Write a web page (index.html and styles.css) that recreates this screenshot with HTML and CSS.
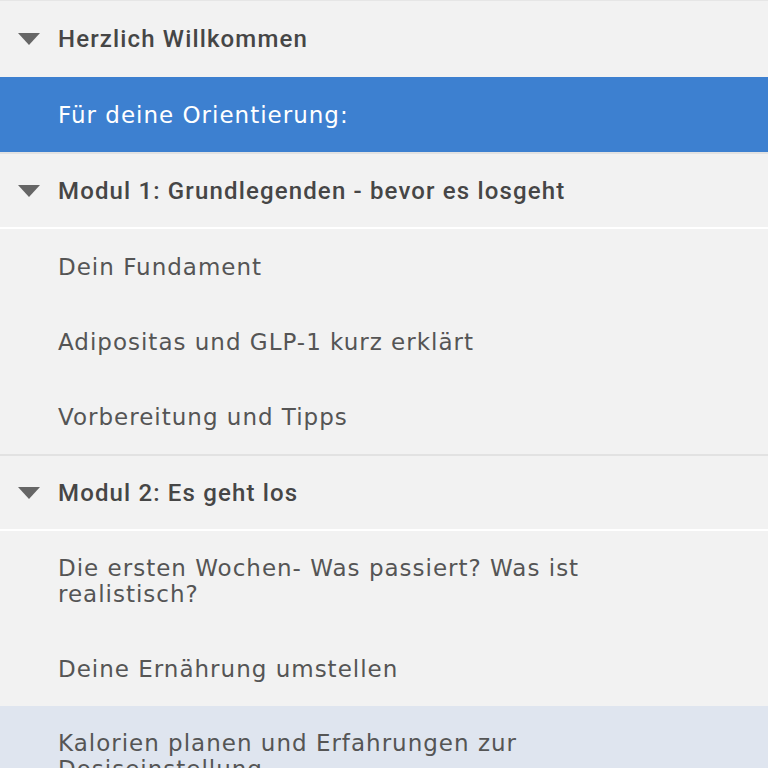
FILE: index.html
```html
<!DOCTYPE html>
<html lang="de">
<head>
<meta charset="utf-8">
<link rel="stylesheet" href="styles.css">
</head>
<body>
<nav class="toc">
  <div class="section">
    <div class="head"><span class="caret"></span><span class="head-text">Herzlich Willkommen</span></div>
    <div class="item active">Für deine Orientierung:</div>
  </div>
  <div class="section">
    <div class="head"><span class="caret"></span><span class="head-text">Modul 1: Grundlegenden - bevor es losgeht</span></div>
    <div class="item">Dein Fundament</div>
    <div class="item">Adipositas und GLP-1 kurz erklärt</div>
    <div class="item">Vorbereitung und Tipps</div>
  </div>
  <div class="section">
    <div class="head"><span class="caret"></span><span class="head-text">Modul 2: Es geht los</span></div>
    <div class="item tall">Die ersten Wochen- Was passiert? Was ist realistisch?</div>
    <div class="item">Deine Ernährung umstellen</div>
    <div class="item tall hover">Kalorien planen und Erfahrungen zur Dosiseinstellung</div>
  </div>
</nav>
</body>
</html>
```

FILE: styles.css
```css
html, body {
  margin: 0;
  padding: 0;
  background: #f2f2f2;
}
.toc {
  display: flex;
  flex-direction: column;
  border-top: 1px solid #e6e6e6;
}
.section {
  display: flex;
  flex-direction: column;
}
.section + .section {
  border-top: 2px solid #e2e2e2;
}
.head {
  display: flex;
  align-items: center;
  height: 75px;
  padding-left: 18px;
  gap: 18px;
  border-bottom: 2px solid #ffffff;
  box-sizing: border-box;
  font-family: Roboto, "Liberation Sans", sans-serif;
  font-weight: 500;
  font-size: 24px;
  letter-spacing: 1.15px;
  color: #464646;
}
.section:first-child .head {
  border-bottom: none;
  height: 76px;
}
.caret {
  width: 0;
  height: 0;
  border-left: 11px solid transparent;
  border-right: 11px solid transparent;
  border-top: 12px solid #666666;
  flex: none;
}
.item {
  display: flex;
  align-items: center;
  min-height: 75px;
  padding: 0 50px 0 58px;
  box-sizing: border-box;
  font-family: "DejaVu Sans", sans-serif;
  font-weight: 400;
  font-size: 23px;
  letter-spacing: 1px;
  line-height: 26px;
  color: #555555;
}
.item.active {
  background: #3d80d0;
  color: #ffffff;
}
.item.hover {
  background: #dfe5ef;
}
.item.tall {
  min-height: 100px;
}
```
